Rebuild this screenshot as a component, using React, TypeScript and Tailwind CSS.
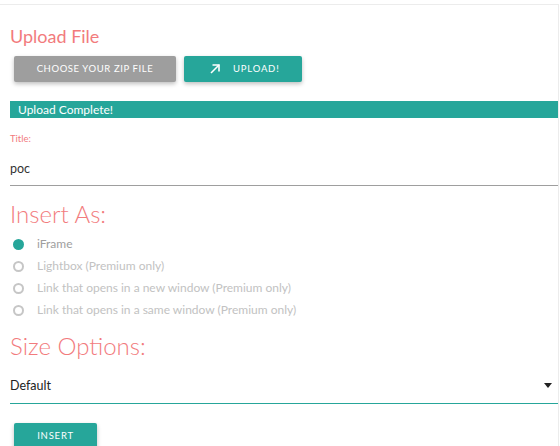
import React from "react";

const red = "text-[#f27b7d]";

function Radio({ checked, label }: { checked?: boolean; label: string }) {
  return (
    <div className="flex items-center h-[22px]">
      {checked ? (
        <span className="ml-[3px] w-[11px] h-[11px] rounded-full bg-[#26a69a]" />
      ) : (
        <span className="ml-[3px] w-[11px] h-[11px] rounded-full border-2 border-[#c6c6c6]" />
      )}
      <span className={`ml-[13px] text-[12px] ${checked ? "text-[#9e9e9e]" : "text-[#c2c2c2]"}`}>{label}</span>
    </div>
  );
}

export default function App() {
  return (
    <div className="w-[560px] h-[446px] bg-white overflow-hidden pt-[4px]" style={{ fontFamily: "Lato, 'Open Sans', sans-serif" }}>
      <div className="w-[559px] h-[460px] border-t border-r border-[#ececec] pl-[10px]">
        <div className={`mt-[19px] h-[24px] leading-[24px] text-[18px] ${red}`}>Upload File</div>
        <div className="mt-[8px] ml-[4px] flex gap-[8px]">
          <div className="w-[162px] h-[26px] bg-[#9e9e9e] rounded-[2px] shadow-[0_2px_4px_rgba(0,0,0,0.25)] flex items-center justify-center text-white text-[9.5px] tracking-[0.6px]">
            CHOOSE YOUR ZIP FILE
          </div>
          <div className="w-[118px] h-[26px] bg-[#26a69a] rounded-[2px] shadow-[0_2px_4px_rgba(0,0,0,0.25)] flex items-center text-white text-[9.5px] tracking-[0.8px]">
            <svg className="ml-[25px]" width="12" height="12" viewBox="0 0 12 12" fill="none" stroke="white" strokeWidth="1.6">
              <path d="M2 10 L10 2" />
              <path d="M3.5 2 H10 V8.5" />
            </svg>
            <span className="ml-[12px]">UPLOAD!</span>
          </div>
        </div>
        <div className="mt-[19px] w-[548px] h-[17px] bg-[#26a69a] text-white text-[12px] leading-[17px] pl-[8px]">
          Upload Complete!
        </div>
        <div className={`mt-[14px] text-[9.5px] leading-[14px] ${red}`}>Title:</div>
        <div className="mt-[14px] w-[548px] h-[26px] border-b border-[#9e9e9e] text-[12.5px] leading-[18px] text-[#333]">poc</div>
        <div className={`mt-[13px] text-[24px] leading-[30px] font-light ${red}`}>Insert As:</div>
        <div className="mt-[4px]">
          <Radio checked label="iFrame" />
          <Radio label="Lightbox (Premium only)" />
          <Radio label="Link that opens in a new window (Premium only)" />
          <Radio label="Link that opens in a same window (Premium only)" />
        </div>
        <div className={`mt-[10px] text-[24px] leading-[30px] font-light ${red}`}>Size Options:</div>
        <div className="mt-[16px] w-[548px] h-[27px] border-b border-[#26a69a] flex items-start justify-between text-[12.5px] leading-[18px] text-[#222]">
          <span>Default</span>
          <svg className="mr-[6px] mt-[6px]" width="8" height="5" viewBox="0 0 8 5">
            <path d="M0 0 H8 L4 5 Z" fill="#222" />
          </svg>
        </div>
        <div className="mt-[19px] ml-[4px] w-[83px] h-[26px] bg-[#26a69a] rounded-[2px] shadow-[0_2px_4px_rgba(0,0,0,0.25)] flex items-center justify-center text-white text-[9.5px] tracking-[0.8px]">
          INSERT
        </div>
      </div>
    </div>
  );
}
